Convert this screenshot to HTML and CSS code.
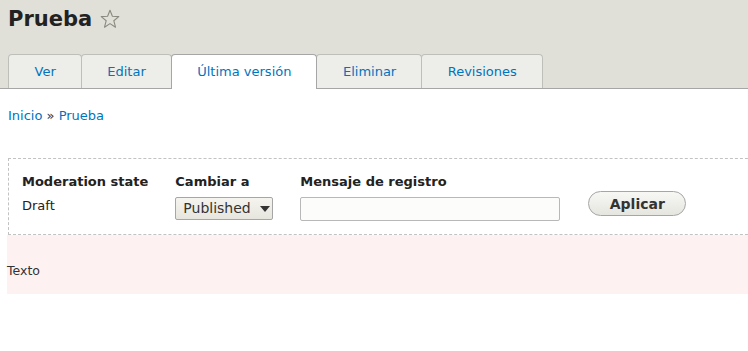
FILE: index.html
```html
<!DOCTYPE html>
<html>
<head>
	<meta charset="utf-8">
	<title>Prueba</title>
	<link rel="stylesheet" href="styles.css">
</head>
<body>
	<div class="header">
		<h1 class="title">Prueba
			<svg class="star" width="20" height="20" viewBox="0 0 20 20"><path d="M10 1.2 L12.4 7.3 L18.8 7.6 L13.8 11.7 L15.5 18.2 L10 14.6 L4.5 18.2 L6.2 11.7 L1.2 7.6 L7.6 7.3 Z" fill="none" stroke="#8a8a80" stroke-width="1.1" stroke-linejoin="round"/></svg>
		</h1>
		<ul class="tabs">
			<li><a href="#">Ver</a></li>
			<li><a href="#">Editar</a></li>
			<li class="active"><a href="#">Última versión</a></li>
			<li><a href="#">Eliminar</a></li>
			<li><a href="#">Revisiones</a></li>
		</ul>
	</div>
	<div class="breadcrumb">
		<a href="#">Inicio</a> » <a href="#">Prueba</a>
	</div>
	<form class="moderation">
		<div class="item">
			<label>Moderation state</label>
			<div class="value">Draft</div>
		</div>
		<div class="item">
			<label>Cambiar a</label>
			<div class="select">Published <span class="arrow"></span></div>
		</div>
		<div class="item">
			<label>Mensaje de registro</label>
			<input class="text" type="text">
		</div>
		<div class="item item-last">
			<button class="button" type="button">Aplicar</button>
		</div>
	</form>
	<div class="content">Texto</div>
</body>
</html>
```

FILE: styles.css
```css
* {
	padding: 0px;
	margin: 0px;
	box-sizing: border-box;
}
body {
	font-family: "DejaVu Sans", sans-serif;
	font-size: 13px;
	line-height: 18px;
	color: #333;
	background: #fff;
	overflow: hidden;
}
a {
	color: #0074bd;
	text-decoration: none;
}
.header {
	background: #e0e0d8;
	padding: 0 8px;
}
.title {
	padding-top: 6px;
	font-size: 21px;
	line-height: 26px;
	font-weight: bold;
	color: #222;
	display: flex;
	align-items: center;
	gap: 8px;
}
.star {
	margin-top: -1px;
}
.tabs {
	margin-top: 22px;
	display: flex;
	list-style: none;
	border-bottom: 1px solid #a6a6a6;
	margin-left: -8px;
	margin-right: -8px;
	padding-left: 8px;
}
.tabs li {
	background: #ededea;
	border: 1px solid #bfbfba;
	border-bottom: none;
	border-radius: 4px 4px 0 0;
	margin-right: -1px;
}
.tabs li a {
	display: block;
	padding: 8px 25px 7px 25.5px;
	line-height: 18px;
}
.tabs li.active {
	background: #fff;
	border-color: #a6a6a6;
	margin-bottom: -1px;
	position: relative;
	z-index: 1;
	padding-bottom: 1px;
}
.breadcrumb {
	margin: 18px 8px 0;
}
.moderation {
	margin: 33px -20px 0 8px;
	border: 1px dashed #c2c2c2;
	padding: 14px 13px 13px;
	display: flex;
	gap: 27px;
	align-items: flex-start;
}
.item-last {
	margin-left: 1px;
}
.item label {
	display: block;
	font-weight: bold;
	color: #222;
}
.item .value {
	margin-top: 6px;
	color: #222;
}
.select {
	margin-top: 6px;
	width: 98px;
	height: 23px;
	border: 1px solid #a6a6a6;
	border-radius: 2px;
	background: linear-gradient(#f5f4ee, #e6e5de);
	font-size: 14px;
	line-height: 21px;
	color: #333;
	padding-left: 7px;
	display: flex;
	align-items: center;
}
.arrow {
	margin-left: 9px;
	width: 0;
	height: 0;
	border-left: 5px solid transparent;
	border-right: 5px solid transparent;
	border-top: 6px solid #333;
}
.text {
	display: block;
	margin-top: 6px;
	width: 260px;
	height: 24px;
	border: 1px solid #b8b8b8;
	border-radius: 2px;
	background: #fcfcfa;
}
.button {
	margin-top: 18px;
	width: 98px;
	height: 25px;
	border: 1px solid #a6a6a6;
	border-radius: 13px;
	background: linear-gradient(#f7f7f4, #e6e6e0);
	font-family: "DejaVu Sans", sans-serif;
	font-size: 14px;
	font-weight: bold;
	color: #333;
}
.content {
	margin-left: 7px;
	background: #fdf2f1;
	padding: 28px 0 15px;
	line-height: 16px;
	font-size: 12.5px;
	color: #333;
}
```
